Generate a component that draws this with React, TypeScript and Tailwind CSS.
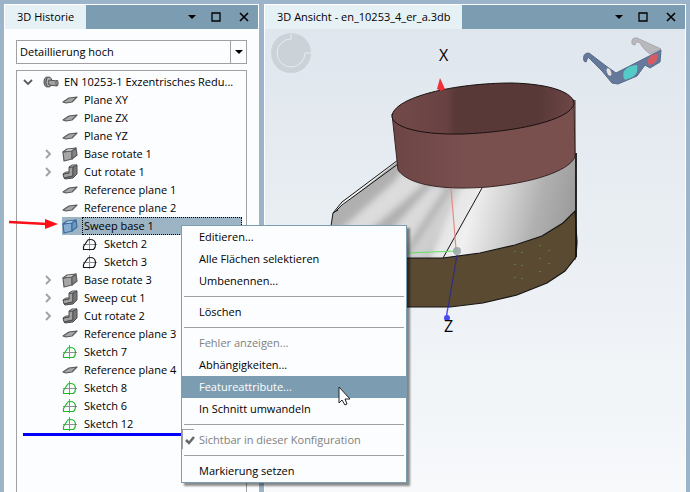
import type { ReactNode } from "react";

type IconKind = "plane" | "base" | "cut" | "sweep" | "sketch" | "sketchGreen";

interface TreeItem {
  label: string;
  icon: IconKind;
  expandable?: boolean;
  nested?: boolean;
  selected?: boolean;
}

const treeItems: TreeItem[] = [
  { label: "Plane XY", icon: "plane" },
  { label: "Plane ZX", icon: "plane" },
  { label: "Plane YZ", icon: "plane" },
  { label: "Base rotate 1", icon: "base", expandable: true },
  { label: "Cut rotate 1", icon: "cut", expandable: true },
  { label: "Reference plane 1", icon: "plane" },
  { label: "Reference plane 2", icon: "plane" },
  { label: "Sweep base 1", icon: "sweep", selected: true },
  { label: "Sketch 2", icon: "sketch", nested: true },
  { label: "Sketch 3", icon: "sketch", nested: true },
  { label: "Base rotate 3", icon: "base", expandable: true },
  { label: "Sweep cut 1", icon: "cut", expandable: true },
  { label: "Cut rotate 2", icon: "cut", expandable: true },
  { label: "Reference plane 3", icon: "plane" },
  { label: "Sketch 7", icon: "sketchGreen" },
  { label: "Reference plane 4", icon: "plane" },
  { label: "Sketch 8", icon: "sketchGreen" },
  { label: "Sketch 6", icon: "sketchGreen" },
  { label: "Sketch 12", icon: "sketchGreen" },
];

function BoxShape({ front, side, top, line }: { front: string; side: string; top: string; line: string }) {
  return (
    <g stroke={line} strokeWidth="1.200" strokeLinejoin="round">
      <path d="M1 6 10 5V13L2 15Z" fill={front} />
      <path d="M1 6 5 3 14 2 10 5Z" fill={top} />
      <path d="M10 5 14 2 15 9 10 13Z" fill={side} />
    </g>
  );
}

function FeatureIcon({ kind }: { kind: IconKind }) {
  return (
    <svg viewBox="0 0 16 16" className="size-4 shrink-0" aria-hidden="true">
      {kind === "plane" && (
        <path d="M1 10 7 6 15 5 10 10 4 11Z" fill="#a8a8a8" stroke="#585858" strokeWidth="1.200" strokeLinejoin="round" />
      )}
      {kind === "base" && <BoxShape front="#a6a6a6" side="#858585" top="#d4d4d4" line="#5c5c5c" />}
      {kind === "sweep" && <BoxShape front="#86aed4" side="#6c98c4" top="#b4d0ea" line="#3f6d9b" />}
      {kind === "cut" && (
        <g stroke="#4f4f4f" strokeWidth="1" strokeLinejoin="round">
          <path d="M1 10 7 9V3L11 3V12L2 14Z" fill="#a0a0a0" />
          <path d="M7 3 10 1 15 1 11 3Z" fill="#cfcfcf" />
          <path d="M11 3 15 1V10L11 14 3 15 2 14 11 12Z" fill="#787878" />
          <path d="M1 10 4 8H7V9Z" fill="#cfcfcf" />
        </g>
      )}
      {(kind === "sketch" || kind === "sketchGreen") && (
        <g fill="none">
          <path d="M7.500 1V15M1 8.500H15" stroke="#8e8e8e" />
          <path
            d="M1.500 13.500V10.500L5.500 4.500Q6 3.500 8 3.500 13.500 3.500 13.500 8.500 13.500 12 11.500 13.500Z"
            stroke={kind === "sketch" ? "#1a1a1a" : "#1fb82b"}
            strokeWidth="1.200"
            strokeLinejoin="round"
          />
        </g>
      )}
    </svg>
  );
}

function Chevron({ open }: { open?: boolean }) {
  return (
    <svg viewBox="0 0 10 10" className="size-2.5 shrink-0" aria-hidden="true">
      <path d={open ? "M1 3 5 7 9 3" : "M3 1 7 5 3 9"} fill="none" stroke={open ? "#5c5c5c" : "#a0a0a0"} strokeWidth="1.800" />
    </svg>
  );
}

function TitleBar({ title }: { title: string }) {
  return (
    <header className="flex h-6 shrink-0 items-stretch justify-between bg-[#7c9db1]">
      <h2 className="flex items-center bg-[#e6f1f5] px-3 whitespace-nowrap">{title}</h2>
      <div className="flex items-center gap-3 pr-2">
        <button type="button" aria-label="Menü" className="flex size-3 items-center justify-center">
          <svg viewBox="0 0 8 4" className="h-1 w-2"><path d="M0 0H8L4 4Z" /></svg>
        </button>
        <button type="button" aria-label="Maximieren" className="flex size-3 items-center justify-center">
          <svg viewBox="0 0 10 10" className="size-2.5"><path d="M1 1H9V9H1Z" fill="none" stroke="#000" strokeWidth="1.300" /></svg>
        </button>
        <button type="button" aria-label="Schließen" className="ml-1 flex size-3 items-center justify-center">
          <svg viewBox="0 0 10 10" className="size-2.5"><path d="M1 1 9 9M9 1 1 9" stroke="#000" strokeWidth="1.600" /></svg>
        </button>
      </div>
    </header>
  );
}

function TreeRow({ item }: { item: TreeItem }) {
  return (
    <li className={"flex h-[18px] items-center pr-1 " + (item.nested ? "pl-[65px]" : "pl-[26px]")}>
      {!item.nested && (
        <span className="mr-[9px] flex w-2.5">{item.expandable && <Chevron />}</span>
      )}
      <div className={"flex h-[18px] min-w-0 items-center " + (item.selected ? "flex-1 bg-[#9db4c4]" : "")}>
        <FeatureIcon kind={item.icon} />
        <span
          className={
            "ml-1 flex h-[18px] items-center border border-dotted pl-px whitespace-nowrap " +
            (item.selected ? "flex-1 border-black" : "border-transparent")
          }
        >
          {item.label}
        </span>
      </div>
    </li>
  );
}

function HistoryPanel() {
  return (
    <section className="flex w-[255px] shrink-0 flex-col border border-b-0 border-white bg-[#fcfdfe]">
      <TitleBar title="3D Historie" />
      <div className="flex min-h-0 flex-1 flex-col gap-1.5 px-[11px] pt-[11px]">
        <div className="relative h-6 shrink-0">
          <select
            aria-label="Detaillierung"
            className="h-full w-full appearance-none rounded-none border border-[#a0a0a0] bg-[#fcfdfe] pr-5 pl-[3px] outline-none"
          >
            <option>Detaillierung hoch</option>
          </select>
          <span className="pointer-events-none absolute inset-y-0 right-0 flex w-[17px] items-center justify-center border-l border-[#a0a0a0]">
            <svg viewBox="0 0 8 4" className="h-1 w-2"><path d="M0 0H8L4 4Z" /></svg>
          </span>
        </div>
        <div className="min-h-0 flex-1 border border-b-0 border-[#a0a0a0] bg-[#fcfdfe] pt-0.5">
          <div className="flex h-[18px] items-center pl-1.5">
            <Chevron open />
            <svg viewBox="0 0 16 16" className="ml-2.5 size-4 shrink-0" aria-hidden="true">
              <g fill="#8f8f8f" stroke="#505050">
                <ellipse cx="4" cy="8" rx="3" ry="5" />
                <ellipse cx="6" cy="8" rx="3" ry="5" fill="#b0b0b0" />
                <path d="M6 6 14 7Q16 9 14 12L6 11Q5 8 6 6Z" fill="#a2a2a2" />
                <ellipse cx="14" cy="9" rx="1" ry="3" fill="#ccc" />
              </g>
            </svg>
            <span className="ml-1 pl-px whitespace-nowrap">EN 10253-1 Exzentrisches Redu...</span>
          </div>
          <ul>
            {treeItems.map((item) => (
              <TreeRow key={item.label} item={item} />
            ))}
          </ul>
          <div className="ml-1.5 h-[3px] w-[210px] bg-[#0000f8]" />
        </div>
      </div>
    </section>
  );
}

function Model() {
  return (
    <svg viewBox="265 29 420 463" preserveAspectRatio="xMinYMin slice" className="size-full" role="img" aria-label="Exzentrisches Reduzierstück">
      <defs>
        <linearGradient id="inner" x1="0" x2="1">
          <stop offset="0" stopColor="#734a49" />
          <stop offset="0.300" stopColor="#684242" />
          <stop offset="0.350" stopColor="#583938" />
          <stop offset="0.800" stopColor="#583938" />
          <stop offset="1" stopColor="#6e4646" />
        </linearGradient>
        <linearGradient id="outer" x1="0" x2="1">
          <stop offset="0" stopColor="#6c4545" />
          <stop offset="0.400" stopColor="#7a504f" />
          <stop offset="1" stopColor="#7a504f" />
        </linearGradient>
        <linearGradient id="steel" gradientUnits="userSpaceOnUse" x1="470" y1="215" x2="576" y2="240">
          <stop offset="0" stopColor="#f0f0f0" />
          <stop offset="0.300" stopColor="#d2d2d2" />
          <stop offset="0.600" stopColor="#b0b0b0" />
          <stop offset="1" stopColor="#969696" />
        </linearGradient>
        <clipPath id="steelArea">
          <path d="M331 226 333 213 398 161 576 153V260H331Z" />
        </clipPath>
        <filter id="sheen" x="-10%" y="-10%" width="120%" height="120%">
          <feGaussianBlur stdDeviation="3" />
        </filter>
      </defs>

      <circle cx="291" cy="53" r="20" fill="#cbd3d9" />
      <path d="M291 34V39A14 14 0 1 0 305 53H311" fill="none" stroke="#e8edf1" />

      <g strokeLinejoin="round">
        <path d="M632 44Q631 37 637 38L661 49 650 54Q643 49 640 43 636 40 635 45Z" fill="#b8b8bd" stroke="#a8a8ae" />
        <path d="M584 61Q582 53 589 53L606 66 616 73 661 50 660 62 650 68 645 65 637 76 618 84 612 83 602 71 588 57 586 62Z" fill="#65799b" stroke="#56698a" />
        <path d="M624 71Q629 65 637 65 639 72 633 77L625 80Q622 76 624 71Z" fill="#55cbc7" />
        <path d="M648 60Q650 54 657 54 659 60 653 64L649 65Q647 63 648 60Z" fill="#d75b62" />
        <ellipse cx="609" cy="72" rx="2" ry="4" transform="rotate(-20 609 72)" fill="#e7e3df" />
      </g>

      <path d="M331 226 333 213 342 202 398 161 576 153V260H350Z" fill="url(#steel)" />
      <g clipPath="url(#steelArea)">
        <g filter="url(#sheen)">
          <path d="M320 140H480L440 270H320Z" fill="#b0b0b0" />
          <path d="M335 235 395 181 402 170 425 183 372 228 350 250Z" fill="#dcdcdc" />
          <path d="M378 245 432 185 446 187 404 250Z" fill="#dadada" />
          <path d="M404 262 454 186 466 187 424 262Z" fill="#cfcfcf" />
          <path d="M428 262 462 186 480 186 446 262Z" fill="#e8e8e8" />
        </g>
      </g>
      <path d="M331 226 333 213 342 202 398 160M335 212 342 205 398 164M333 213 338 210" fill="none" stroke="#151515" />
      <path d="M350 258H443L480 253 515 245 542 236 563 223 575 211 577 242 576 257 565 271 547 283 517 295 483 303 450 307H350Z" fill="#5b4a32" stroke="#151515" strokeWidth="1.200" />
      <path d="M575 100V153" fill="none" stroke="#3a2525" />
      <path d="M576 153V257" fill="none" stroke="#151515" strokeWidth="1.800" />
      <path d="M482 188 443 258" stroke="#151515" fill="none" />
      <g stroke="#7a3c24" strokeDasharray="1 12">
        <path d="M427 277V305M452 260V300M470 258V296M481 256V292M514 256V290M536 254V276" />
        <path d="M515 251V280M540 245V275M522 252V285M549 250V272" stroke="#5fae45" />
      </g>

      <path d="M392 114 398 170C410 187 450 190 488 187 530 183 568 172 575 157L574 100Z" fill="url(#outer)" stroke="#3a2525" />
      <path d="M392 116C394 97 455 83 512 83 552 84 574 93 574 104 570 120 517 132 462 134 416 135 392 126 392 116Z" fill="url(#inner)" stroke="#181010" />
      <path d="M440 78 437 89 441 91 445 89Z" fill="#ef3038" />
      <path d="M451 188 456 249" stroke="#e78a86" strokeWidth="1.200" />
      <path d="M407 253 457 251" stroke="#65df68" strokeWidth="1.200" />
      <path d="M457 255 448 308" stroke="#2d2d86" strokeWidth="1.200" />
      <path d="M448 307 446 319" stroke="#4f4ff5" strokeWidth="1.500" />
      <circle cx="457" cy="251" r="4" fill="#92a0a3" fillOpacity="0.800" />
      <circle cx="447" cy="318" r="3" fill="#4949ee" />
      <g fontFamily="Open Sans, sans-serif" fontSize="16">
        <text x="439" y="61">X</text>
        <text x="444" y="332">Z</text>
      </g>
    </svg>
  );
}

function ViewPanel() {
  return (
    <section className="flex min-w-0 flex-1 flex-col border border-b-0 border-white bg-[#e4edf2]">
      <TitleBar title="3D Ansicht - en_10253_4_er_a.3db" />
      <div className="min-h-0 flex-1 bg-linear-to-b from-[#dfe6ed] to-[#f7f9fb]">
        <Model />
      </div>
    </section>
  );
}

function MenuEntry({ children, state }: { children: ReactNode; state?: "active" | "disabled" }) {
  return (
    <button
      type="button"
      role="menuitem"
      disabled={state === "disabled"}
      className={
        "flex h-[22px] w-full items-center pl-[17px] text-left whitespace-nowrap " +
        (state === "active" ? "bg-[#7c9db1] text-white" : state === "disabled" ? "text-[#808080]" : "")
      }
    >
      {children}
    </button>
  );
}

function Separator() {
  return <hr className="mx-0.5 my-1 border-[#a0a0a0]" />;
}

function ContextMenu() {
  return (
    <div role="menu" className="absolute top-[225px] left-[181px] w-[226px] border border-[#7c9db1] bg-[#fcfdfe] shadow-[3px_3px_2px_rgba(0,0,0,0.45)]">
      <MenuEntry>Editieren...</MenuEntry>
      <MenuEntry>Alle Flächen selektieren</MenuEntry>
      <MenuEntry>Umbenennen...</MenuEntry>
      <Separator />
      <MenuEntry>Löschen</MenuEntry>
      <Separator />
      <MenuEntry state="disabled">Fehler anzeigen...</MenuEntry>
      <MenuEntry>Abhängigkeiten...</MenuEntry>
      <MenuEntry state="active">Featureattribute...</MenuEntry>
      <MenuEntry>In Schnitt umwandeln</MenuEntry>
      <Separator />
      <div className="relative">
        <span className="absolute left-0 flex h-5 w-3 items-center border-t border-l border-[#a0a0a0] pl-0.5">
          <svg viewBox="0 0 10 10" className="size-2.5 shrink-0" aria-hidden="true"><path d="M1 5 4 8 9 2" fill="none" stroke="#666" strokeWidth="2.500" /></svg>
        </span>
        <MenuEntry state="disabled">Sichtbar in dieser Konfiguration</MenuEntry>
      </div>
      <Separator />
      <MenuEntry>Markierung setzen</MenuEntry>
    </div>
  );
}

export default function App() {
  return (
    <main className="relative flex h-screen gap-[5px] overflow-hidden bg-[#9bb4c9] px-1 pt-1 font-['Open_Sans',sans-serif] text-[11px] leading-4 text-black">
      <HistoryPanel />
      <ViewPanel />
      <svg viewBox="0 0 50 12" className="absolute top-[218px] left-[9px] h-3 w-[50px]" aria-hidden="true">
        <path d="M0 4 38 6" stroke="#fb1018" strokeWidth="2.500" />
        <path d="M36 1 49 6 36 11Z" fill="#fb1018" />
      </svg>
      <ContextMenu />
      <svg viewBox="0 0 13 20" className="absolute top-[386px] left-[338px] h-5 w-[13px]" aria-hidden="true">
        <path d="M1 1V17L4 14 7 19 9 18 7 13H12Z" fill="#fff" stroke="#222" />
      </svg>
    </main>
  );
}
